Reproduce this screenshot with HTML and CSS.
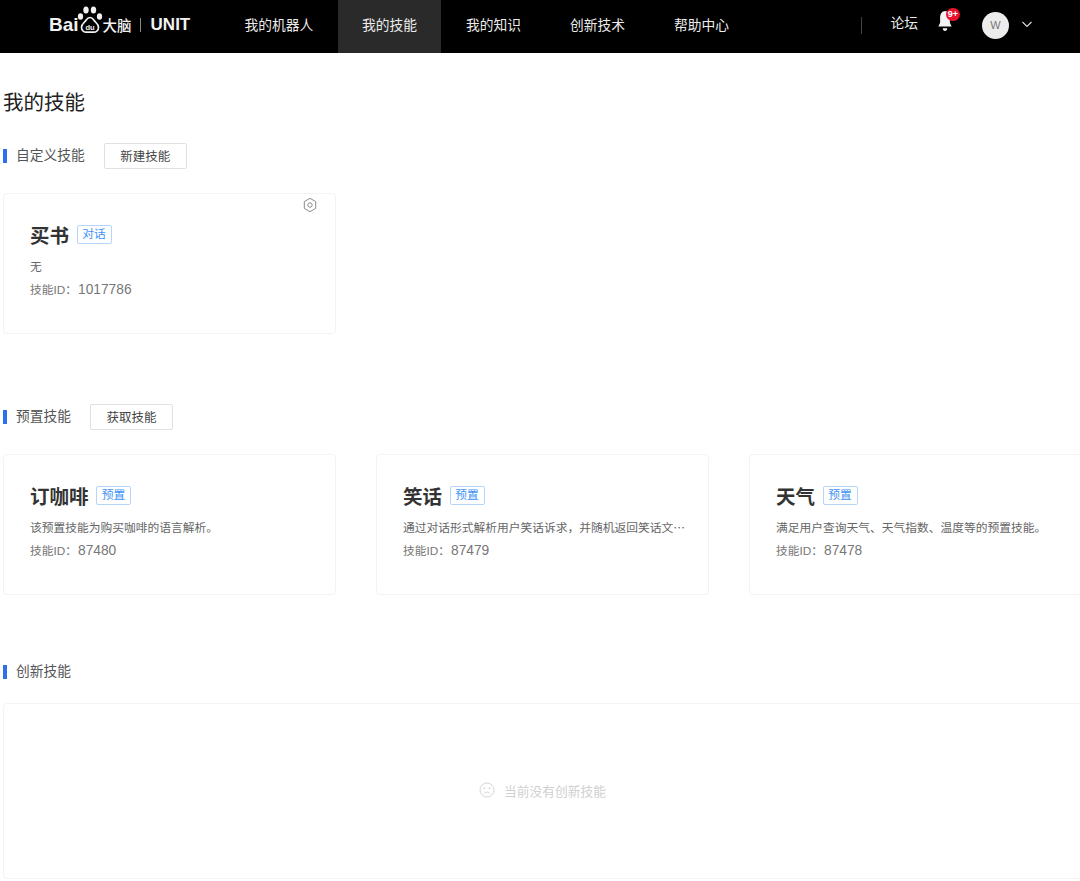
FILE: index.html
```html
<!DOCTYPE html>
<html lang="zh-CN">
<head>
<meta charset="utf-8">
<title>我的技能</title>
<link rel="stylesheet" href="styles.css">
</head>
<body>
<header class="topbar">
  <div class="logo">
    <span class="logo-bai">Bai</span>
    <svg class="paw" width="26" height="28" viewBox="0 0 26 28">
      <g fill="#f2f2f2">
        <ellipse cx="3.500" cy="10.500" rx="2.600" ry="3.200"/>
        <ellipse cx="9" cy="4" rx="2.700" ry="3.500"/>
        <ellipse cx="16.500" cy="4" rx="2.700" ry="3.500"/>
        <ellipse cx="22.500" cy="10.500" rx="2.600" ry="3.200"/>
      </g>
      <path fill="none" stroke="#f2f2f2" stroke-width="1.700" d="M13 11.500c-3 0-3.500 2.500-5.500 4.500-2 2-3 3.300-3 5.200 0 3 2.300 5 5 5h7c2.700 0 5-2 5-5 0-1.900-1-3.200-3-5.200-2-2-2.500-4.500-5.500-4.500z"/>
      <text class="paw-text" x="13" y="24" text-anchor="middle">du</text>
    </svg>
    <span class="logo-cn">大脑</span>
    <span class="logo-sep"></span>
    <span class="logo-unit">UNIT</span>
  </div>
  <nav class="nav">
    <a class="nav-item first-item">我的机器人</a>
    <a class="nav-item active">我的技能</a>
    <a class="nav-item">我的知识</a>
    <a class="nav-item">创新技术</a>
    <a class="nav-item">帮助中心</a>
  </nav>
  <div class="top-right">
    <span class="top-sep"></span>
    <a class="forum">论坛</a>
    <span class="bell">
      <svg width="16" height="22" viewBox="0 0 18 20" preserveAspectRatio="none"><path fill="#f2f2f2" d="M9 1c-3.500 0-5.500 2.800-5.500 6v4.500L1.500 15h15l-2-3.500V7c0-3.200-2-6-5.500-6z"/><path fill="#f2f2f2" d="M6.500 16.500h5c0 1.500-1 2.500-2.500 2.500s-2.500-1-2.500-2.500z"/></svg>
      <span class="badge">9+</span>
    </span>
    <span class="avatar">W</span>
    <svg class="caret" width="10" height="7" viewBox="0 0 10 7"><path d="M.5 1l4.500 4.500L9.500 1" fill="none" stroke="#d8d8d8" stroke-width="1.200"/></svg>
  </div>
</header>

<main class="page">
  <h1 class="page-title">我的技能</h1>

  <section class="section first">
    <div class="sec-head">
      <span class="sec-title">自定义技能</span>
      <button class="btn">新建技能</button>
    </div>
    <div class="cards">
      <article class="card">
        <svg class="gear" width="16" height="16" viewBox="0 0 16 16"><path fill="none" stroke="#8a8a8a" d="M8 1.300l5.700 3.300v6.800L8 14.700l-5.700-3.300V4.600z" stroke-linejoin="round"/><circle cx="8" cy="8" r="2.200" fill="none" stroke="#8a8a8a"/></svg>
        <div class="card-head"><span class="card-name">买书</span><span class="tag">对话</span></div>
        <p class="card-desc">无</p>
        <p class="card-id">技能ID：<span class="num">1017786</span></p>
      </article>
    </div>
  </section>

  <section class="section second">
    <div class="sec-head">
      <span class="sec-title">预置技能</span>
      <button class="btn">获取技能</button>
    </div>
    <div class="cards">
      <article class="card">
        <div class="card-head"><span class="card-name">订咖啡</span><span class="tag">预置</span></div>
        <p class="card-desc">该预置技能为购买咖啡的语言解析。</p>
        <p class="card-id">技能ID：<span class="num">87480</span></p>
      </article>
      <article class="card">
        <div class="card-head"><span class="card-name">笑话</span><span class="tag">预置</span></div>
        <p class="card-desc">通过对话形式解析用户笑话诉求，并随机返回笑话文…</p>
        <p class="card-id">技能ID：<span class="num">87479</span></p>
      </article>
      <article class="card">
        <div class="card-head"><span class="card-name">天气</span><span class="tag">预置</span></div>
        <p class="card-desc">满足用户查询天气、天气指数、温度等的预置技能。</p>
        <p class="card-id">技能ID：<span class="num">87478</span></p>
      </article>
    </div>
  </section>

  <section class="section third">
    <div class="sec-head">
      <span class="sec-title">创新技能</span>
    </div>
    <div class="empty">
      <svg width="16" height="16" viewBox="0 0 16 16"><g fill="none" stroke="#d6d6d6"><circle cx="8" cy="8" r="7"/><path d="M5 11.500c1.600-1.900 4.400-1.900 6 0"/></g><circle cx="5.400" cy="6.300" r="1" fill="#d6d6d6"/><circle cx="10.600" cy="6.300" r="1" fill="#d6d6d6"/></svg>
      <span>当前没有创新技能</span>
    </div>
  </section>
</main>
</body>
</html>
```
FILE: styles.css
```css
* { box-sizing: border-box; }
html, body { margin: 0; padding: 0; }
body {
  width: 1080px;
  height: 881px;
  overflow: hidden;
  background: #fff;
  color: #333;
  font-family: "Liberation Sans", "Noto Sans CJK SC", sans-serif;
}

.topbar {
  height: 53px;
  background: #000;
  display: flex;
  align-items: stretch;
  padding-left: 49px;
  color: #ececec;
}
.logo {
  flex: none;
  width: 171.5px;
  display: flex;
  align-items: center;
  color: #f2f2f2;
  padding-bottom: 4px;
}
.logo-bai { font-size: 19px; font-weight: 700; }
.paw { margin: -9px 0 0 -2px; flex: none; }
.paw-text { font: 700 7.500px "Liberation Sans", sans-serif; fill: #f2f2f2; }
.logo-cn { font-size: 14.5px; font-weight: 500; }
.logo-sep { width: 1px; height: 14px; background: #888; margin: 0 10px 0 8px; }
.logo-unit { font-size: 17px; font-weight: 700; }

.nav { display: flex; }
.nav-item {
  display: flex;
  align-items: center;
  padding: 0 24px 6px;
  font-size: 13.75px;
  width: 104px;
}
.nav-item.first-item { width: 117.5px; }
.nav-item.active { background: #2a2a2a; width: 103px; margin-right: 1px; }

.top-right { margin-left: auto; display: flex; align-items: center; padding: 0 48px 2px 0; }
.top-sep { width: 1px; height: 17px; background: #444; margin-right: 28px; }
.forum { font-size: 13.75px; margin: 0 19px 8px 0; }
.bell { position: relative; display: flex; margin: 0 29px 9px 0; }
.badge {
  position: absolute;
  top: -2px;
  left: 9px;
  width: 14px;
  height: 13px;
  border-radius: 7px;
  background: #e8112d;
  color: #fff;
  font-size: 9px;
  line-height: 13px;
  font-weight: 700;
  text-align: center;
}
.avatar {
  width: 27px;
  height: 27px;
  border-radius: 50%;
  background: #ececec;
  color: #777;
  font-size: 11px;
  line-height: 27px;
  text-align: center;
  margin-right: 13px;
}
.caret { flex: none; margin-bottom: 2px; }

.page { padding: 36px 0 0 3px; }
.page-title {
  margin: 0;
  font-size: 20.5px;
  line-height: 28px;
  font-weight: 400;
  color: #222;
}

.section.first { margin-top: 26px; }
.section.second { margin-top: 70px; }
.section.third { margin-top: 64px; }

.sec-head { display: flex; align-items: center; gap: 19px; height: 26px; }
.sec-title {
  font-size: 13.75px;
  color: #555;
  border-left: 4px solid #2f6fed;
  padding-left: 9px;
  line-height: 14px;
}
.btn {
  width: 83px;
  height: 26px;
  padding: 0 0 2px;
  background: #fff;
  border: 1px solid #e0e0e0;
  border-radius: 2px;
  color: #444;
  font: 400 12.5px "Liberation Sans", "Noto Sans CJK SC", sans-serif;
}

.cards { display: flex; gap: 40px; margin-top: 24px; }
.card {
  position: relative;
  flex: none;
  width: 333px;
  height: 141px;
  padding: 26px 22px 0 26px;
  border: 1px solid #f3f3f3;
  border-radius: 4px;
  background: #fff;
}
.gear { position: absolute; top: 3px; right: 17px; }
.card-head { display: flex; align-items: center; gap: 7.5px; height: 28px; }
.card-name { font-size: 19.5px; font-weight: 700; color: #333; }
.tag {
  width: 35px;
  height: 19px;
  border: 1px solid #b5d5fb;
  border-radius: 2px;
  color: #3f93f5;
  font-size: 11.75px;
  line-height: 16px;
  text-align: center;
}
.card-desc {
  margin: 9px 0 0;
  font-family: "Noto Sans CJK SC", sans-serif;
  font-size: 11.75px;
  line-height: 17px;
  color: #666;
  white-space: nowrap;
}
.card-id { margin: 7px 0 0; font-size: 11.75px; line-height: 17px; color: #777; }
.num { font-size: 13.75px; margin-left: 1px; }

.empty {
  margin-top: 18px;
  height: 176px;
  width: 1080px;
  border: 1px solid #f3f3f3;
  border-radius: 4px;
  display: flex;
  align-items: center;
  gap: 9px;
  padding: 0 0 2px 475px;
  color: #d0d0d0;
  font-size: 12.75px;
}
```
